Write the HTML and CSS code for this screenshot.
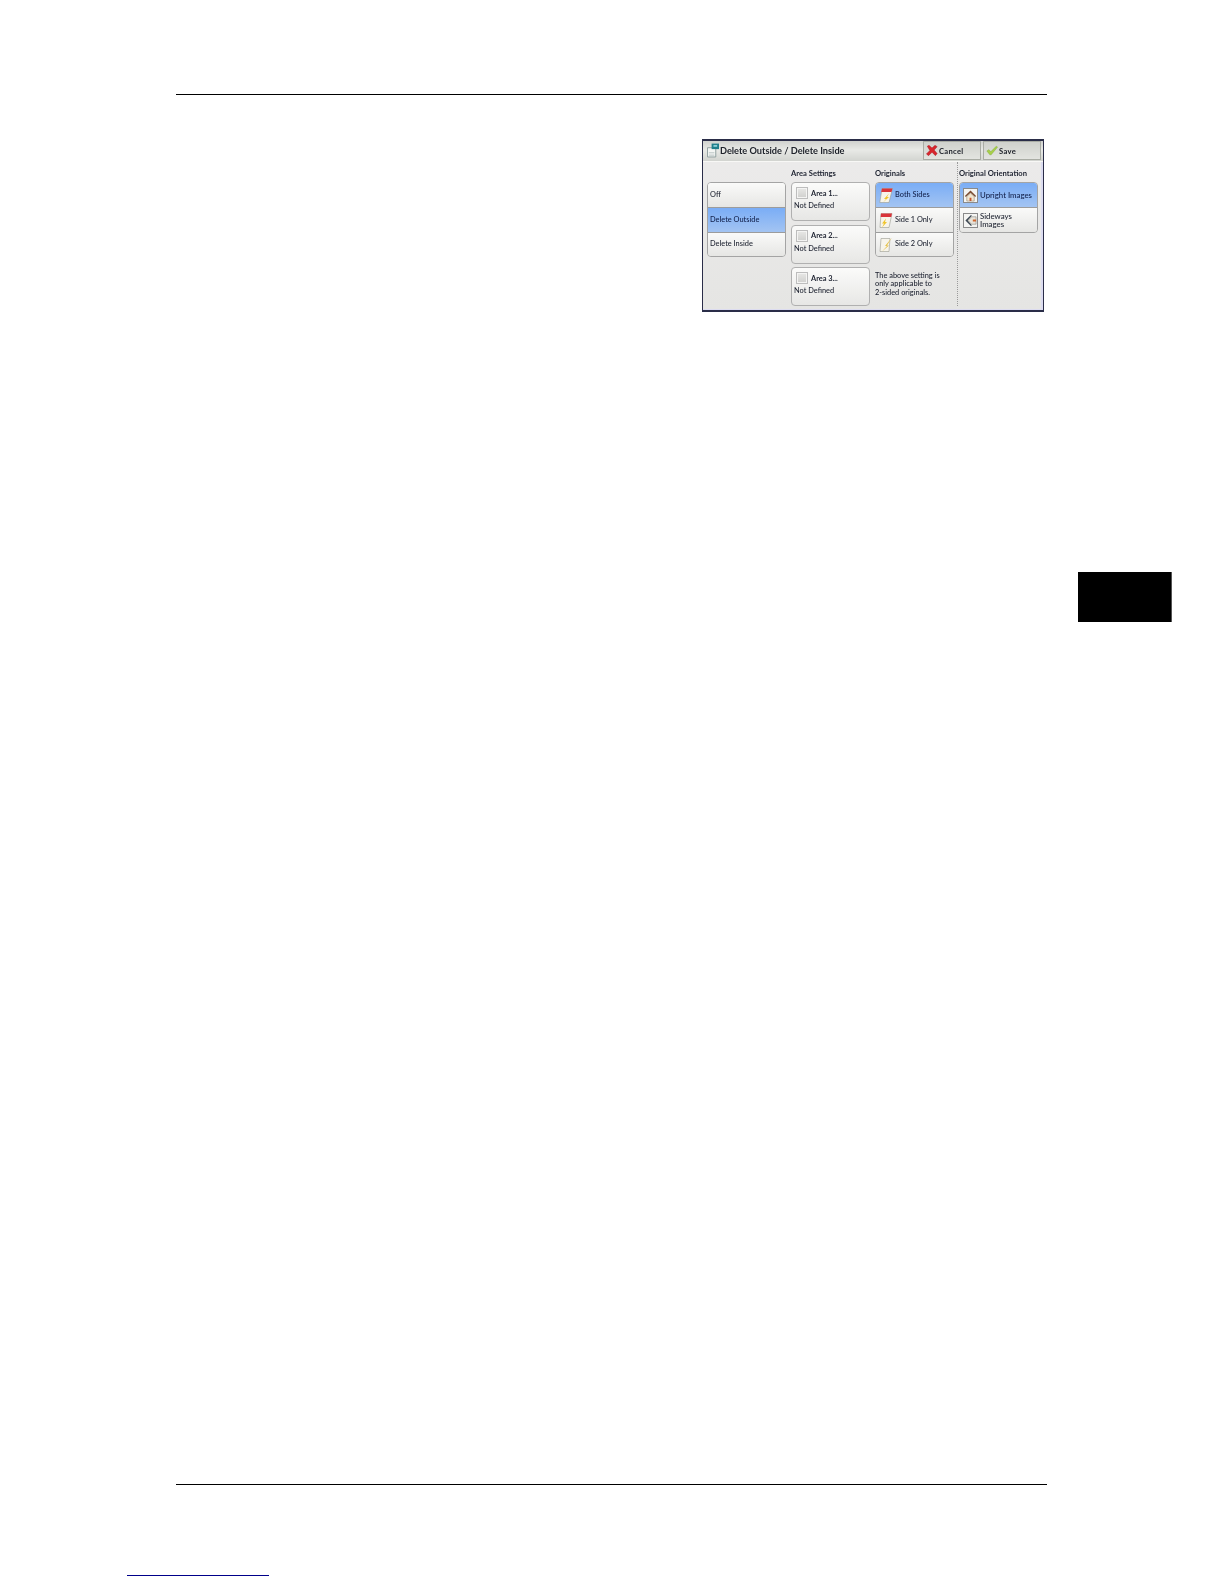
FILE: index.html
```html
<!DOCTYPE html>
<html lang="en">
<head>
<meta charset="utf-8">
<title>Delete Outside / Delete Inside</title>
<link rel="stylesheet" href="styles.css">
</head>
<body>
<div class="page">
  <div class="rule rule-top"></div>
  <section class="panel">
    <header class="titlebar">
      <svg class="title-icon" viewBox="0 0 13 15"><path d="M.5 4.500h9v10h-9z" fill="#f4f6f4" stroke="#8a9a9a"/><path d="M2 10h6M2 12.500h6" stroke="#b5c0c0"/><path d="M5 0h8v6H5z" fill="#1f7f8c"/><path d="M7 1.500h4v2H7z" fill="#8fd0d8"/></svg>
      <h1 class="title">Delete Outside / Delete Inside</h1>
      <button class="head-btn btn-cancel"><svg class="head-icon" viewBox="0 0 14 12"><path d="M1.500 1l2-1L7 3l3.500-3 2.500 1.500L9.500 5.500l3.500 4-2 2.500L7 8l-4 4-2.500-2L4.500 6z" fill="#d8262c" stroke="#a01520" stroke-width=".5"/></svg><span>Cancel</span></button>
      <button class="head-btn btn-save"><svg class="head-icon" viewBox="0 0 14 12"><path d="M1 6.500l2.500-1.500 2 2.500L12 1l1.500 1L6 11H4.500z" fill="#a8d048" stroke="#7aa832" stroke-width=".5"/></svg><span>Save</span></button>
    </header>
    <div class="columns">
      <div class="col">
        <div class="col-head"></div>
        <div class="seg">
          <div class="opt"><span>Off</span></div>
          <div class="opt on"><span>Delete Outside</span></div>
          <div class="opt"><span>Delete Inside</span></div>
        </div>
      </div>
      <div class="col">
        <div class="col-head">Area Settings</div>
        <div class="areas">
          <div class="area"><div class="area-top"><i class="check"></i><b>Area 1...</b></div><div class="area-sub">Not Defined</div></div>
          <div class="area"><div class="area-top"><i class="check"></i><b>Area 2...</b></div><div class="area-sub">Not Defined</div></div>
          <div class="area"><div class="area-top"><i class="check"></i><b>Area 3...</b></div><div class="area-sub">Not Defined</div></div>
        </div>
      </div>
      <div class="col">
        <div class="col-head">Originals</div>
        <div class="seg">
          <div class="opt with-icon on"><svg class="page-icon" viewBox="0 0 14 16"><path d="M3 1h10.500L10 15H.8z" fill="#f7f4ea" stroke="#9a9a90" stroke-width=".6"/><path d="M3 1h10.500l-1 3.500H2.200z" fill="#d9343a"/><path d="M10 6L5 11.500h2L4 15l6-5.500H8z" fill="#f0c52c"/></svg><span>Both Sides</span></div>
          <div class="opt with-icon"><svg class="page-icon" viewBox="0 0 14 16"><path d="M2 1h11l-3 14H1z" fill="#f7f4ea" stroke="#9a9a90" stroke-width=".6"/><path d="M2 1h11l-.8 3.500H1.700z" fill="#d9343a"/><path d="M7 6L3 11l2 0-2 4 5-5.500H6z" fill="#f0c52c"/></svg><span>Side 1 Only</span></div>
          <div class="opt with-icon"><svg class="page-icon" viewBox="0 0 14 16"><path d="M2 2h9l-1 13H1z" fill="#f7f4ea" stroke="#9a9a90" stroke-width=".6"/><path d="M13 1L6 9.500l2 0-5 5.500 7-6H8z" fill="#e6c24a"/></svg><span>Side 2 Only</span></div>
        </div>
        <p class="note">The above setting is<br>only applicable to<br>2-sided originals.</p>
      </div>
      <div class="col col-last">
        <div class="col-head">Original Orientation</div>
        <div class="seg">
          <div class="opt orient on"><span class="tile"><svg viewBox="0 0 14 14"><path d="M1 7.500L7 1.500l6 6-1 1-5-4.500-5 4.500z" fill="#7a4a30"/><path d="M3 8l4-3.500L11 8v5H3z" fill="#f2e6d0" stroke="#7a6a55" stroke-width=".5"/><path d="M6 9.500h2V13H6z" fill="#c5562e"/></svg></span><span>Upright Images</span></div>
          <div class="opt orient"><span class="tile"><svg viewBox="0 0 14 14"><g transform="rotate(-90 7 7)"><path d="M1 7.500L7 1.500l6 6-1 1-5-4.500-5 4.500z" fill="#3f4a55"/><path d="M3 8l4-3.500L11 8v5H3z" fill="#e8e4da" stroke="#6a6a65" stroke-width=".5"/><path d="M6 9.500h2V13H6z" fill="#d0662e"/></g></svg></span><span class="two">Sideways<br>Images</span></div>
        </div>
      </div>
    </div>
  </section>
  <div class="tab"></div>
  <div class="rule rule-bottom"></div>
  <div class="footer-link"></div>
</div>
</body>
</html>
```
FILE: styles.css
```css
* { box-sizing: border-box; }
html, body { margin: 0; padding: 0; background: #fff; }
body { height: 1584px; overflow: hidden; font-family: Lato, "Open Sans", "Liberation Sans", sans-serif; color: #1d2230; }
.page { padding-top: 94px; }
.rule { height: 1px; width: 871px; margin-left: 176px; background: #000; }

.panel { width: 342px; height: 173px; margin: 44px 0 0 702px; border: solid #2a2d48; border-width: 2px 1px 2px 1px; background: linear-gradient(#ecebeb, #e5e5e3); box-shadow: inset -2px -1px 0 #dcdcf0; display: flex; flex-direction: column; filter: blur(.4px); }
.titlebar { height: 21px; display: flex; align-items: center; padding: 0 0 1px 4px; background: linear-gradient(#d0d2ce, #e8e9e6 45%, #d2d4d0); border-bottom: 1px solid #f8f8f6; flex: none; }
.title-icon { width: 12px; height: 15px; flex: none; }
.title { margin: 0 0 0 1px; font-size: 9.200px; font-weight: 700; flex: 1; white-space: nowrap; color: #20242c; }
.head-btn { height: 19px; padding: 0 0 0 2px; display: flex; align-items: center; gap: 1px; border: 1px solid #a9aca4; background: linear-gradient(#cfd1cc, #e3e4e0); font: 700 7.600px Lato, "Open Sans", sans-serif; letter-spacing: .3px; color: #20242c; }
.btn-cancel { width: 58px; margin-right: 2px; }
.btn-save { width: 58px; margin-right: 2px; }
.head-icon { width: 12px; height: 11px; flex: none; }

.columns { flex: 1; display: flex; padding-left: 4px; }
.col { width: 79px; margin-right: 5px; display: flex; flex-direction: column; }
.col-last { width: 81px; margin: 0 0 4px -2px; padding-left: 1px; border-left: 1px dotted #9a9a9a; }
.col-head { height: 20px; padding-top: 6px; font-size: 7.600px; line-height: 10px; font-weight: 700; white-space: nowrap; }

.seg { border: 1px solid #a4a4a4; border-radius: 4px; overflow: hidden; background: linear-gradient(#fbfbfa, #e8e8e6); }
.opt { height: 24.400px; display: flex; align-items: center; padding-left: 2px; font-size: 7.400px; font-weight: 500; line-height: 8.500px; border-top: 1px solid #9c9c9c; background: linear-gradient(#fafaf9, #e6e6e4); white-space: nowrap; }
.opt:first-child { border-top: 0; }
.seg .on { background: linear-gradient(#7aadf6, #a3c4f2); color: #12204a; }
.with-icon { padding-left: 3px; gap: 2px; }
.page-icon { width: 14px; height: 17px; flex: none; }
.seg .orient { padding-left: 3px; gap: 2px; font-size: 7.800px; }
.tile { width: 15px; height: 15px; flex: none; border: 1px solid #8a8a8a; background: #f4f4f2; display: flex; }
.tile svg { width: 100%; height: 100%; }
.two { display: block; }

.areas { display: flex; flex-direction: column; gap: 3.500px; }
.area { height: 39px; padding: 4px 2px; border: 1px solid #b0b0b0; border-radius: 4px; background: linear-gradient(#fbfbfa, #e7e7e5); font-size: 7.400px; font-weight: 500; line-height: 9px; }
.area-top { display: flex; align-items: center; gap: 3px; padding-left: 2px; }
.area-top b { font-weight: 700; }
.check { width: 12px; height: 12px; border: 1px solid #bdbdbd; background: linear-gradient(#e8e8e6, #cfcfcd); box-shadow: inset 0 0 0 1px #f4f4f3; flex: none; }
.area-sub { margin-top: 2px; white-space: nowrap; }
.note { margin: 14.500px 0 0; font-size: 7.400px; font-weight: 500; line-height: 8.700px; white-space: nowrap; }

.tab { width: 94px; height: 50px; margin: 260px 0 0 1078px; background: #000; border-right: 1px solid #555; }
.rule-bottom { margin-top: 862px; }
.footer-link { width: 142px; height: 1px; margin: 90px 0 0 127px; background: #00008a; }
```
